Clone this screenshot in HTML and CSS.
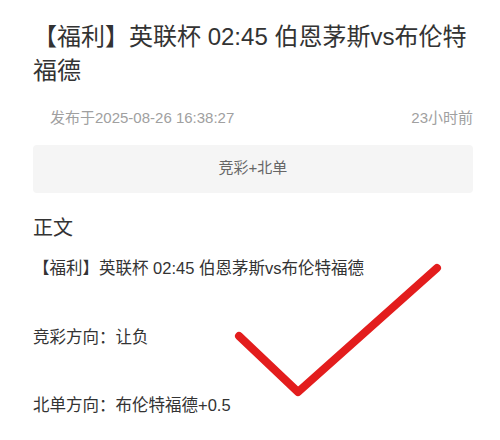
FILE: index.html
```html
<!DOCTYPE html>
<html lang="zh-CN">
<head>
    <meta charset="UTF-8">
    <meta name="viewport" content="width=device-width, initial-scale=1.0">
    <title>【福利】英联杯 02:45 伯恩茅斯vs布伦特福德</title>
    <link rel="stylesheet" href="styles.css">
</head>
<body>

<div class="article">
    <h1 class="article-title">【福利】英联杯 02:45 伯恩茅斯vs布伦特福德</h1>
    <div class="article-meta">
        <span>发布于2025-08-26 16:38:27</span>
        <span>23小时前</span>
    </div>
    <div class="article-tag">竞彩+北单</div>

    <h2 class="section-title">正文</h2>
    <div class="article-body">
        <p>【福利】英联杯 02:45 伯恩茅斯vs布伦特福德</p>
        <p>竞彩方向：让负</p>
        <p>北单方向：布伦特福德+0.5</p>
    </div>

    <!-- red tick drawn over the text -->
    <svg class="tick" width="500" height="440" viewBox="0 0 500 440">
        <polyline points="239,336 298,392 437,268" fill="none" stroke="#e31d1d" stroke-width="8" stroke-linecap="round" stroke-linejoin="round"/>
    </svg>
</div>

</body>
</html>
```

FILE: styles.css
```css
body {
    font-family: "Liberation Sans", "Noto Sans CJK SC", sans-serif;
    margin: 0;
    padding: 0;
    background: #fff;
    color: #333;
}
.article {
    position: relative;
    padding: 20px 27px 0 33px;
}
.article-title {
    margin: 0;
    font-size: 24px;
    font-weight: normal;
    line-height: 34px;
    color: #333;
}
.article-meta {
    display: flex;
    justify-content: space-between;
    margin-top: 20px;
    padding-left: 17px;
    font-size: 15px;
    line-height: 20px;
    color: #a0a0a0;
}
.article-tag {
    margin-top: 17px;
    height: 48px;
    line-height: 46px;
    background: #f5f5f5;
    border-radius: 4px;
    text-align: center;
    font-size: 15px;
    color: #666;
}
.section-title {
    margin: 22px 0 0;
    font-size: 20px;
    font-weight: normal;
    line-height: 26px;
    color: #333;
}
.article-body {
    margin-top: 16px;
    font-size: 16.5px;
    color: #333;
}
.article-body p {
    margin: 0 0 46.5px;
    line-height: 22px;
}
.article-body p:last-child {
    margin-bottom: 0;
}
.tick {
    position: absolute;
    left: 0;
    top: 0;
}
```
